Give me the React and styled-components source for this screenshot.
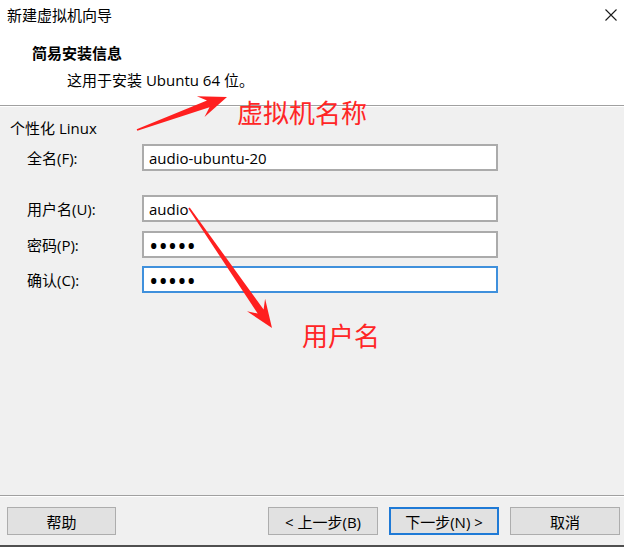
import React from 'react';
import styled, { createGlobalStyle } from 'styled-components';

const GlobalStyle = createGlobalStyle`
  html, body {
    margin: 0;
    padding: 0;
    background: #f0f0f0;
  }
  * {
    box-sizing: border-box;
  }
`;

const FONT = `"Open Sans", "Noto Sans CJK SC", sans-serif`;

const Window = styled.div`
  position: relative;
  width: 624px;
  height: 547px;
  display: flex;
  flex-direction: column;
  background: #f0f0f0;
  border-bottom: 2px solid #4f4f4f;
  font-family: ${FONT};
  font-size: 15px;
  color: #000;
  overflow: hidden;
`;

const TitleBar = styled.div`
  height: 30px;
  display: flex;
  align-items: center;
  justify-content: space-between;
  padding: 0 7px;
  background: #fff;
`;

const TitleText = styled.span`
  line-height: 20px;
`;

const Header = styled.div`
  height: 76px;
  padding: 13px 0 0 32px;
  background: #fff;
  border-bottom: 1px solid #a0a0a0;
`;

const Heading = styled.div`
  font-weight: bold;
  line-height: 20px;
`;

const Subtitle = styled.div`
  margin: 7px 0 0 35px;
  line-height: 20px;
`;

const Body = styled.div`
  flex: 1;
  padding-top: 11px;
  border-top: 1px solid #fff;
`;

const GroupTitle = styled.div`
  padding-left: 10px;
  line-height: 20px;
`;

const Form = styled.div`
  display: flex;
  flex-direction: column;
  padding: 6px 0 0 27px;
`;

const FieldRow = styled.div`
  display: flex;
  align-items: center;
  height: 27px;
  margin-top: ${p => p.$gap || 0}px;
`;

const Label = styled.label`
  width: 115px;
`;

const Field = styled.input`
  width: 356px;
  height: 27px;
  padding: 0 5px;
  background: #fff;
  border: 2px solid ${p => (p.$focused ? '#3f90dc' : '#ababab')};
  font-family: ${FONT};
  font-size: ${p => (p.type === 'password' ? '25px' : '15px')};
  letter-spacing: 0;
  color: #000;
  outline: none;
`;

const Footer = styled.div`
  height: 50px;
  display: flex;
  align-items: flex-start;
  padding: 11px 4px 0 7px;
  border-top: 1px solid #a0a0a0;
  box-shadow: inset 0 1px 0 #fff;
`;

const ButtonGroup = styled.div`
  margin-left: auto;
  display: flex;
  gap: 11px;
`;

const Button = styled.button`
  width: ${p => p.$width || 110}px;
  height: 28px;
  padding: 0;
  background: #e1e1e1;
  border: ${p => (p.$primary ? '2px solid #1f7ad6' : '1px solid #adadad')};
  font-family: ${FONT};
  font-size: 15px;
  color: #000;
`;

const Overlay = styled.svg`
  position: absolute;
  left: 0;
  top: 0;
  pointer-events: none;
`;

const Callout = styled.span`
  position: absolute;
  left: ${p => p.$x}px;
  top: ${p => p.$y}px;
  font-family: "Noto Sans CJK SC", sans-serif;
  font-size: 26px;
  line-height: 30px;
  color: #ff2626;
  white-space: nowrap;
  pointer-events: none;
`;

const CloseIcon = () => (
  <svg width="12" height="12" viewBox="0 0 12 12">
    <path d="M0.5 0.5 L11.5 11.5 M11.5 0.5 L0.5 11.5" stroke="#1a1a1a" strokeWidth="1.1" fill="none" />
  </svg>
);

// tapered annotation arrow, tail -> tip
const arrowPoints = (x1, y1, x2, y2) => {
  const dx = x2 - x1;
  const dy = y2 - y1;
  const len = Math.hypot(dx, dy);
  const ux = dx / len;
  const uy = dy / len;
  const nx = -uy;
  const ny = ux;
  const at = (d, w) => [x2 - ux * d + nx * w, y2 - uy * d + ny * w];
  const pts = [
    [x1 + nx * 0.8, y1 + ny * 0.8],
    at(20, 3.6),
    at(28, 11),
    [x2, y2],
    at(28, -11),
    at(20, -3.6),
    [x1 - nx * 0.8, y1 - ny * 0.8],
  ];
  return pts.map(p => p.map(v => v.toFixed(1)).join(',')).join(' ');
};

export default function App() {
  return (
    <>
      <GlobalStyle />
      <Window>
        <TitleBar>
          <TitleText>新建虚拟机向导</TitleText>
          <CloseIcon />
        </TitleBar>

        <Header>
          <Heading>简易安装信息</Heading>
          <Subtitle>这用于安装 Ubuntu 64 位。</Subtitle>
        </Header>

        <Body>
          <GroupTitle>个性化 Linux</GroupTitle>
          <Form>
            <FieldRow>
              <Label>全名(F):</Label>
              <Field type="text" value="audio-ubuntu-20" readOnly />
            </FieldRow>
            <FieldRow $gap={24}>
              <Label>用户名(U):</Label>
              <Field type="text" value="audio" readOnly />
            </FieldRow>
            <FieldRow $gap={9}>
              <Label>密码(P):</Label>
              <Field type="password" value="audio" readOnly />
            </FieldRow>
            <FieldRow $gap={8}>
              <Label>确认(C):</Label>
              <Field type="password" value="audio" readOnly $focused />
            </FieldRow>
          </Form>
        </Body>

        <Footer>
          <Button $width={109}>帮助</Button>
          <ButtonGroup>
            <Button>&lt; 上一步(B)</Button>
            <Button $primary>下一步(N) &gt;</Button>
            <Button>取消</Button>
          </ButtonGroup>
        </Footer>

        <Overlay width="624" height="547">
          <polygon points={arrowPoints(137, 130, 227, 97)} fill="#ff1f1f" />
          <polygon points={arrowPoints(189, 208, 272, 328)} fill="#ff1f1f" />
        </Overlay>
        <Callout $x={237} $y={97}>虚拟机名称</Callout>
        <Callout $x={302} $y={320}>用户名</Callout>
      </Window>
    </>
  );
}
